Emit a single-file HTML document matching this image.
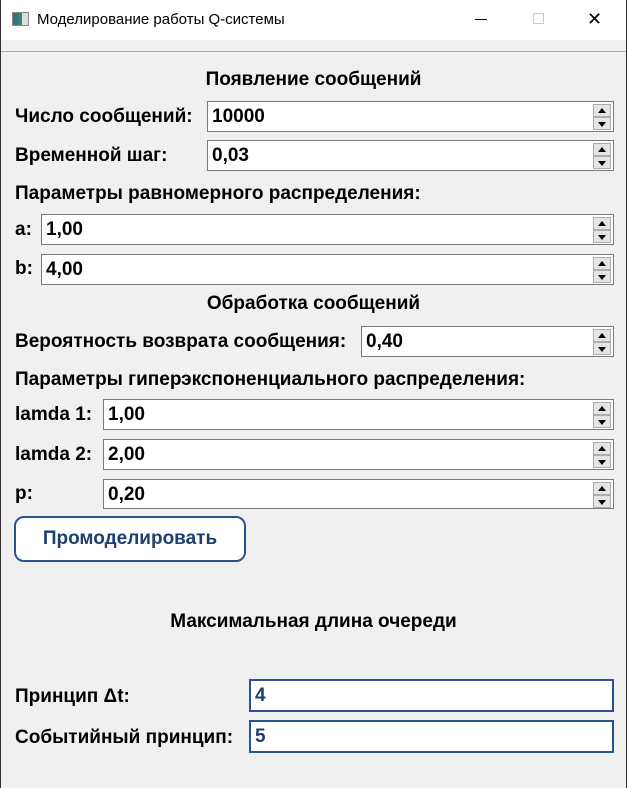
<!DOCTYPE html>
<html><head><meta charset="utf-8"><style>
*{margin:0;padding:0;box-sizing:border-box}
body{width:627px;height:788px;overflow:hidden;background:#f0f0f0;font-family:"Liberation Sans",sans-serif;position:relative;border-left:1px solid #333;border-right:1px solid #333}
.t{position:absolute;font-weight:bold;font-size:19px;color:#000;white-space:nowrap;line-height:22px}
.c{left:0;right:0;text-align:center}
.box{position:absolute;background:#fff;border:1px solid #7a7a7a;height:31px;right:12px}
.box span{position:absolute;left:4px;top:4px;font-weight:bold;font-size:19px}
.sp{position:absolute;right:2px;top:2px;width:18px;height:26px}
.sp div{height:13px;border:1px solid #adadad;background:#e5e5e5;position:relative}
.sp .u:after{content:"";position:absolute;left:4px;top:3px;border:4px solid transparent;border-bottom:5px solid #000;border-top:0}
.sp .d:after{content:"";position:absolute;left:4px;top:4px;border:4px solid transparent;border-top:5px solid #000;border-bottom:0}
.bb{position:absolute;background:#fff;border:2px solid #2a5391;right:12px;height:33px}
.bb span{position:absolute;left:4px;top:4px;font-weight:bold;font-size:19px;color:#1e3f70}
</style></head><body>
<div style="position:absolute;left:0;top:0;right:0;height:40px;background:#fff"></div>
<div style="position:absolute;left:11px;top:12px;width:17px;height:14px;border:1px solid #888;background:linear-gradient(90deg,#2e6b8a 0,#3a8a6a 60%,#ddd 60%)"></div>
<div style="position:absolute;left:36px;top:11px;font-size:15px;color:#000">Моделирование работы Q-системы</div>
<div style="position:absolute;left:474px;top:19px;width:12px;height:1px;background:#000"></div>
<div style="position:absolute;left:532px;top:13px;width:11px;height:11px;border:1px solid #ccc"></div>
<div style="position:absolute;left:586px;top:11px;font-size:18px;line-height:16px;color:#000">✕</div>
<div style="position:absolute;left:0;top:51px;right:0;height:1px;background:#aaa"></div>

<div class="t c" style="top:69px">Появление сообщений</div>
<div class="t" style="left:14px;top:106px">Число сообщений:</div>
<div class="box" style="left:206px;top:101px"><span>10000</span><div class="sp"><div class="u"></div><div class="d"></div></div></div>
<div class="t" style="left:14px;top:145px">Временной шаг:</div>
<div class="box" style="left:206px;top:140px"><span>0,03</span><div class="sp"><div class="u"></div><div class="d"></div></div></div>
<div class="t" style="left:14px;top:183px">Параметры равномерного распределения:</div>
<div class="t" style="left:14px;top:219px">a:</div>
<div class="box" style="left:40px;top:214px"><span>1,00</span><div class="sp"><div class="u"></div><div class="d"></div></div></div>
<div class="t" style="left:14px;top:258px">b:</div>
<div class="box" style="left:40px;top:254px"><span>4,00</span><div class="sp"><div class="u"></div><div class="d"></div></div></div>
<div class="t c" style="top:293px">Обработка сообщений</div>
<div class="t" style="left:14px;top:331px">Вероятность возврата сообщения:</div>
<div class="box" style="left:360px;top:326px"><span>0,40</span><div class="sp"><div class="u"></div><div class="d"></div></div></div>
<div class="t" style="left:14px;top:369px">Параметры гиперэкспоненциального распределения:</div>
<div class="t" style="left:14px;top:404px">lamda 1:</div>
<div class="box" style="left:102px;top:399px"><span>1,00</span><div class="sp"><div class="u"></div><div class="d"></div></div></div>
<div class="t" style="left:14px;top:444px">lamda 2:</div>
<div class="box" style="left:102px;top:439px"><span>2,00</span><div class="sp"><div class="u"></div><div class="d"></div></div></div>
<div class="t" style="left:14px;top:483px">p:</div>
<div class="box" style="left:102px;top:479px;height:30px"><span>0,20</span><div class="sp"><div class="u"></div><div class="d"></div></div></div>
<div style="position:absolute;left:13px;top:516px;width:232px;height:46px;border:2px solid #2a5391;border-radius:10px;background:#fff;text-align:center;line-height:42px;font-weight:bold;font-size:19px;color:#1e3f70">Промоделировать</div>
<div class="t c" style="top:611px">Максимальная длина очереди</div>
<div class="t" style="left:14px;top:686px">Принцип Δt:</div>
<div class="bb" style="left:248px;top:679px"><span>4</span></div>
<div class="t" style="left:14px;top:727px">Событийный принцип:</div>
<div class="bb" style="left:248px;top:720px"><span>5</span></div>
</body></html>
